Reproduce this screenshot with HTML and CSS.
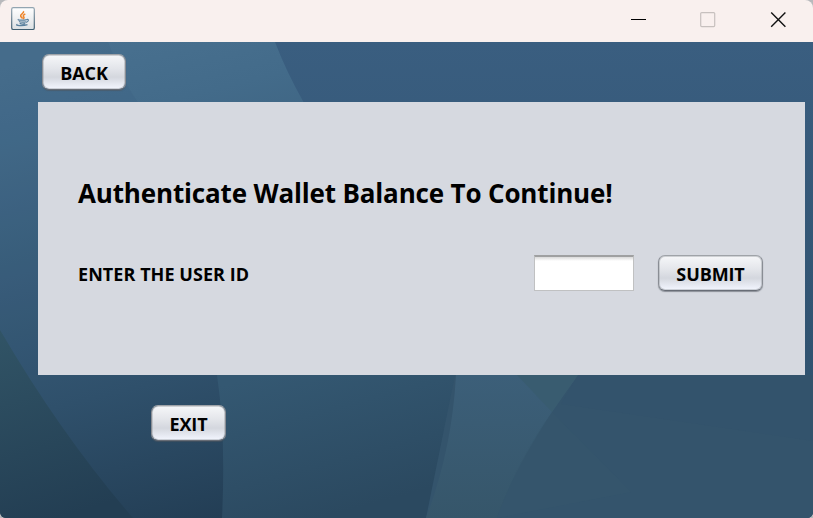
FILE: index.html
```
<!DOCTYPE html>
<html lang="en">
<head>
<meta charset="utf-8">
<title>Wallet</title>
<link rel="stylesheet" href="styles.css">
</head>
<body>
<div class="window">
  <header class="titlebar">
    <svg class="app-icon" width="24" height="24" viewBox="0 0 24 24" fill="none">
      <defs>
        <linearGradient id="tile" x1="0" y1="0" x2="0" y2="1"><stop stop-color="#fff"/><stop offset="1" stop-color="#dce0e3"/></linearGradient>
        <linearGradient id="rim" x1="0" y1="0" x2="0" y2="1"><stop stop-color="#93a5b1"/><stop offset="1" stop-color="#3d5d70"/></linearGradient>
      </defs>
      <rect x=".7" y=".7" width="22.6" height="21.8" rx="1.6" fill="url(#tile)" stroke="url(#rim)" stroke-width="1.2"/>
      <path d="M12.300 4.300c1.400 2-3.800 3-2.600 5 .4.8 1.400 1.400 1.800 2.200M14.300 7c-2.600 1-2.200 2.200-1.500 3 .6.8-.1 1.500-.8 2" stroke="#ee8429" stroke-width="1.500"/>
      <path d="M7.500 12.300c-2 1 4.500 1.300 8.300.3M8 14.500c1.500 1 5.500.8 7 .2M8.700 16.400c1.500.8 4.300.7 5.600.2M15.700 12.500c2.200-.9 2.500 1.800-.6 2.900M6.400 17.200c-3.400 1.400 5.500 2.200 10.100.4" stroke="#59809d" stroke-width="1.200"/>
    </svg>
    <div class="controls">
      <svg width="16" height="16" viewBox="0 0 16 16"><path d="M1 7.500h15" stroke="#000"/></svg>
      <svg width="16" height="16" viewBox="0 0 16 16"><rect x=".7" y=".6" width="14" height="14" rx="1" fill="none" stroke="#c7c0be" stroke-width="1.200"/></svg>
      <svg width="16" height="16" viewBox="0 0 16 16"><path d="M1.200.500l14.200 14.200M15.400.500L1.200 14.700" stroke="#111" stroke-width="1.400"/></svg>
    </div>
  </header>
  <main class="content">
    <svg class="backdrop" width="813" height="476" viewBox="0 42 813 476" preserveAspectRatio="none">
      <defs>
        <linearGradient id="base" gradientUnits="userSpaceOnUse" x1="100" y1="42" x2="220" y2="518"><stop stop-color="#48708f"/><stop offset=".15" stop-color="#436b8a"/><stop offset=".7" stop-color="#2f506b"/><stop offset="1" stop-color="#233e55"/></linearGradient>
        <linearGradient id="upper" gradientUnits="userSpaceOnUse" x1="0" y1="42" x2="0" y2="518"><stop stop-color="#3a5e80"/><stop offset=".65" stop-color="#305371"/><stop offset="1" stop-color="#33546a"/></linearGradient>
        <linearGradient id="edge" gradientUnits="userSpaceOnUse" x1="0" y1="330" x2="60" y2="518"><stop stop-color="#315466"/><stop offset="1" stop-color="#233e53"/></linearGradient>
        <linearGradient id="middle" gradientUnits="userSpaceOnUse" x1="280" y1="370" x2="320" y2="518"><stop stop-color="#345872"/><stop offset="1" stop-color="#2b4960"/></linearGradient>
        <linearGradient id="fan" gradientUnits="userSpaceOnUse" x1="0" y1="375" x2="0" y2="518"><stop stop-color="#3c5f79"/><stop offset="1" stop-color="#36566a"/></linearGradient>
      </defs>
      <path fill="url(#base)" d="M0 42h813v476H0z"/>
      <path fill="#315373" opacity=".12" d="M108 42Q122 80 139 104H250V375H0V42z"/>
      <path fill="url(#upper)" d="M275 42Q286 71 304 103L550 375V518H813V42z"/>
      <path fill="url(#edge)" d="M0 330Q62 436 133 518H0z"/>
      <path fill="url(#middle)" d="M217 375Q226 435 222 518H430L457 375z"/>
      <path fill="#34546c" d="M455 375H813V518H426z"/>
      <path fill="url(#fan)" d="M456 375H578Q518 456 497 518H426Q452 450 456 375z"/>
      <path fill="#395c70" d="M517 375H578L552 412z"/>
      <path fill="#385a6d" opacity=".3" d="M552 412L631 492 497 518Q518 459 552 412z"/>
      <path fill="#305270" opacity=".2" d="M561 404L813 441V375H578z"/>
    </svg>
    <button class="btn back">BACK</button>
    <section class="panel">
      <h1 class="heading">Authenticate Wallet Balance To Continue!</h1>
      <div class="row">
        <label class="label" for="uid">ENTER THE USER ID</label>
        <input class="field" id="uid" type="text">
        <button class="btn submit">SUBMIT</button>
      </div>
    </section>
    <button class="btn exit">EXIT</button>
  </main>
</div>
</body>
</html>
```
FILE: styles.css
```
* { box-sizing: border-box; }
body {
  margin: 0;
  background: #b8b9bc;
  color: #000;
  font-family: "Open Sans", "Noto Sans", sans-serif;
  overflow: hidden;
}
.window {
  width: 813px;
  height: 518px;
  border-radius: 8px 8px 6px 6px;
  overflow: hidden;
}
.titlebar {
  height: 42px;
  display: flex;
  justify-content: space-between;
  background: #f9f0ee;
  padding: 7px 27px 0 11px;
}
.app-icon { display: block; }
.controls { display: flex; gap: 54px; padding-top: 5px; }
.content {
  position: relative;
  z-index: 0;
  height: 476px;
  padding: 12px 8px 0 38px;
  display: flex;
  flex-direction: column;
  align-items: flex-start;
}
.backdrop { position: absolute; inset: 0; z-index: -1; }
.btn {
  height: 36px;
  flex: none;
  padding: 1px 0 0;
  border: 1px solid #898d94;
  border-top-color: #9fa3a8;
  border-bottom-color: #686d76;
  border-radius: 7px;
  background: linear-gradient(#f6f7f9 0%, #e3e5ea 40%, #d4d7de 65%, #f3f6ff 100%) padding-box;
  box-shadow: inset 0 0 0 1px #8d919860, 0 1px 1px #4f555e90;
  color: #000;
  font: 700 18px/34px "Open Sans", "Noto Sans", sans-serif;
  letter-spacing: -.1px;
  white-space: nowrap;
}
.back { width: 84px; margin-left: 4px; }
.panel {
  width: 767px;
  height: 273px;
  flex: none;
  margin-top: 12px;
  padding: 73px 42px 0 40px;
  background: #d6d9e0;
}
.heading {
  margin: 0;
  height: 36px;
  font-size: 26px;
  font-weight: 700;
  line-height: 36px;
  letter-spacing: -.16px;
  white-space: nowrap;
}
.row { display: flex; align-items: flex-start; margin-top: 44px; height: 37px; }
.label {
  flex: 1;
  font-size: 18px;
  font-weight: 700;
  line-height: 38px;
  letter-spacing: .06px;
}
.field {
  width: 100px;
  height: 36px;
  padding: 0 6px;
  border: 1px solid #c0c1c2;
  border-top: 2px solid #9fa0a1;
  background: linear-gradient(#d9d9d9, #fff 4px);
  font: 18px "Open Sans", sans-serif;
  outline: 0;
}
.submit { width: 105px; margin-left: 24px; }
.exit { width: 75px; margin: 30px 0 0 113px; }
```
